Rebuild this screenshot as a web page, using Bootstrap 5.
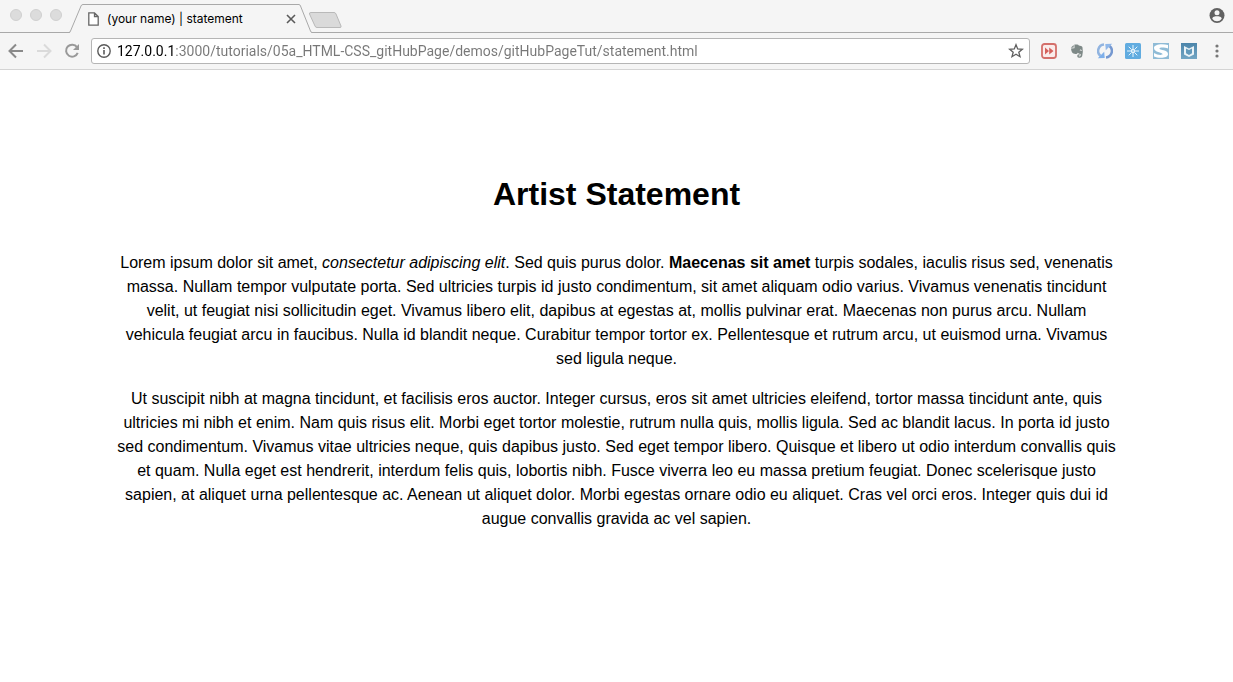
<!DOCTYPE html>
<html lang="en">
<head>
<meta charset="utf-8">
<meta name="viewport" content="width=device-width, initial-scale=1">
<title>(your name) | statement</title>
<link rel="stylesheet" href="https://cdn.jsdelivr.net/npm/bootstrap@5.3.0/dist/css/bootstrap.min.css">
<style>
body { font-family: "Liberation Sans", Arial, sans-serif; color: #000; background: #fff; }
.chrome { font-family: Inter, Roboto, sans-serif; background: #f5f5f5; border-bottom: 1px solid #d4d4d4; }
.chrome button { border: 0; background: none; padding: 0; color: #5f5f5f; display: flex; flex: none; }
.chrome svg { display: block; flex: none; }
.tab-strip { height: 33px; box-shadow: inset 0 -1px #a9a9a9; }
.lights { gap: 8px; padding: 9px 7px 0 10px; }
.chrome .light { width: 12px; height: 12px; border-radius: 50%; background: #dcdcdc; border: 1px solid #d0d0d0; }
.tab-face { width: 216px; height: 29px; border-top: 1px solid #a9a9a9; background: #f5f5f5; padding: 0 3px 0 5px; font-size: 12px; }
.chrome .new-tab { margin: 12px 0 0 -4px; }
.toolbar { height: 36px; padding: 0 8px; }
.nav-set { gap: 12px; margin-right: 11px; }
.address { height: 26px; border: 1px solid #b5b5b5; border-radius: 3px; background: #fff; padding: 0 5px; }
.address input { border: 0; outline: 0; padding: 0 6px; height: 22px; font-family: Roboto, sans-serif; font-size: 14px; color: transparent;
  background: linear-gradient(90deg, #000 64px, #777 64px); -webkit-background-clip: text; background-clip: text; }
.extensions { gap: 12px; margin-left: 11px; }
.statement { padding: 100px 116px 0; text-align: center; font-size: 16px; line-height: 24px; }
.statement h1 { font-size: 32px; line-height: 48px; font-weight: 700; margin-bottom: 33px; }
.statement p { margin-bottom: 16px; }
</style>
</head>
<body>
<header class="chrome">
  <div class="tab-strip d-flex align-items-end">
    <div class="lights d-flex align-self-start">
      <button class="light" aria-label="Close window"></button>
      <button class="light" aria-label="Minimize window"></button>
      <button class="light" aria-label="Zoom window"></button>
    </div>
    <div class="d-flex align-self-end">
      <svg width="14" height="29" viewBox="0 0 14 29"><path d="M0 29L1 28.500L12 2Q12.500.5 14 .5V29Z" fill="#f5f5f5"/><path d="M0 28.500Q1 28.500 1.500 27L12 2Q12.500.5 14 .5" fill="none" stroke="#a9a9a9"/></svg>
      <div class="tab-face d-flex align-items-center">
        <svg width="11" height="14" viewBox="0 0 11 14"><path d="M.8.8H6.500L10.200 4.500V13.200H.8ZM6.500.8V4.500H10.200" fill="#fff" stroke="#666" stroke-width="1.300"/></svg>
        <a href="#statement" class="text-black text-decoration-none ms-2 me-auto">(your name) | statement</a>
        <button aria-label="Close tab"><svg width="10" height="10" viewBox="0 0 10 10"><path d="M1 1L9 9M9 1L1 9" stroke="#5a5a5a" stroke-width="1.600"/></svg></button>
      </div>
      <svg width="13" height="29" viewBox="0 0 13 29"><path d="M0 .5Q1 .5 1.500 2L12 28L13 29H0Z" fill="#f5f5f5"/><path d="M0 .5Q1 .5 1.500 2L11.500 27Q12 28.500 13 28.500" fill="none" stroke="#a9a9a9"/></svg>
    </div>
    <button class="new-tab align-self-start" aria-label="New tab"><svg width="34" height="17" viewBox="0 0 34 17"><path d="M3 .5H26Q27.500.5 28 2L33 14Q33.500 15.500 32 15.500H9Q7.500 15.500 7 14L1.500 2Q1 .5 3 .5Z" fill="#dadada" stroke="#b9b9b9"/></svg></button>
    <button class="ms-auto me-2 align-self-start pt-2" aria-label="Profile"><svg width="16" height="16" viewBox="0 0 16 16"><circle cx="8" cy="7.500" r="7.500" fill="#616161"/><circle cx="8" cy="4.800" r="2.500" fill="#f5f5f5"/><path d="M3.300 10.700C3.300 8.800 6.300 8.200 8 8.200S12.700 8.800 12.700 10.700C11.600 12.400 9.900 13.200 8 13.200S4.400 12.400 3.300 10.700Z" fill="#f5f5f5"/></svg></button>
  </div>
  <div class="toolbar d-flex align-items-center">
    <div class="nav-set d-flex">
      <button aria-label="Back"><svg width="16" height="16" viewBox="0 0 16 16"><path d="M15 8H2M8 1.500L1.500 8L8 14.500" fill="none" stroke="#8a8a8a" stroke-width="2"/></svg></button>
      <button aria-label="Forward"><svg width="16" height="16" viewBox="0 0 16 16"><path d="M1 8H14M8 1.500L14.500 8L8 14.500" fill="none" stroke="#dadada" stroke-width="2"/></svg></button>
      <button aria-label="Reload"><svg width="16" height="16" viewBox="0 0 16 16"><path d="M13 4.200A6 6 0 1 0 13.700 9.800" fill="none" stroke="#999" stroke-width="2"/><path d="M15 1V7H9Z" fill="#999"/></svg></button>
    </div>
    <div class="address d-flex align-items-center flex-grow-1">
      <svg width="14" height="14" viewBox="0 0 14 14"><circle cx="7" cy="7" r="6.200" fill="none" stroke="#5a5a5a" stroke-width="1.400"/><path d="M7 6V10.500M7 3.300V4.900" stroke="#5a5a5a" stroke-width="1.600"/></svg>
      <input class="flex-grow-1" type="text" aria-label="Address" value="127.0.0.1:3000/tutorials/05a_HTML-CSS_gitHubPage/demos/gitHubPageTut/statement.html">
      <button aria-label="Bookmark"><svg width="16" height="16" viewBox="0 0 16 16"><path d="M8 1.700L9.700 6L14.300 6.300L10.800 9.200L12 13.700L8 11.200L4 13.700L5.200 9.200L1.700 6.300L6.300 6Z" fill="none" stroke="#5f5f5f" stroke-width="1.300"/></svg></button>
    </div>
    <div class="extensions d-flex">
      <button aria-label="Fast forward extension"><svg width="16" height="16" viewBox="0 0 16 16"><rect x="1" y="1" width="14" height="14" rx="2.500" fill="#faeceb" stroke="#d4706b" stroke-width="1.800"/><path d="M4 4.500L8 8L4 11.500ZM8.200 4.500L12.500 8L8.200 11.500Z" fill="#d4605b"/></svg></button>
      <button aria-label="Evernote"><svg width="16" height="16" viewBox="0 0 16 16"><path d="M5.400 1.500H8.200Q9.400 1.500 9.800 2.600L12 3Q13.300 3.200 13.500 4.500Q14.300 9 13.200 13Q12.800 14.800 11 14.800H9.900Q8.200 14.700 8.200 13Q8.200 11.300 10 11.300H10.700V12.500H10Q9.500 12.600 9.600 13.100Q9.700 13.500 10.300 13.500Q12 13.500 11.700 11Q10 11 8.800 9.800Q8.200 11.300 6.500 11L4.500 10.500Q2.500 9.800 2 5.500L5 5.300Q5.500 5.200 5.500 4.700Z" fill="#7e8987"/><path d="M1.800 4.700L4.700 1.900V4.600Z" fill="#7e8987"/><path d="M10.900 7.300Q12 6.500 12.700 7.500" stroke="#f5f5f5" fill="none"/></svg></button>
      <button aria-label="Sync"><svg width="16" height="16" viewBox="0 0 16 16"><path d="M7 1.500A6.500 6.500 0 0 0 3.500 13" fill="none" stroke="#91b4e0" stroke-width="2.500"/><path d="M.8 15.300L7.700 15L7.200 8.800Z" fill="#7eafea"/><path d="M9 14.500A6.500 6.500 0 0 0 12.500 3" fill="none" stroke="#7598d0" stroke-width="2.500"/><path d="M15.200.7L8.300 1L8.800 7.200Z" fill="#90b8ea"/></svg></button>
      <button aria-label="Snowflake extension"><svg width="16" height="16" viewBox="0 0 16 16"><rect width="16" height="16" rx="1.500" fill="#61ace0"/><path d="M8 2V6M8 10V14M2 8H6M10 8H14M3.700 3.700L6.600 6.600M9.400 9.400L12.300 12.300M12.300 3.700L9.400 6.600M6.600 9.400L3.700 12.300" stroke="#e9f5fc" stroke-width="1"/><circle cx="8" cy="8" r="1.700" fill="#a9d3ee" stroke="#fff" stroke-width=".8"/></svg></button>
      <button aria-label="S extension"><svg width="16" height="16" viewBox="0 0 16 16"><rect width="16" height="16" fill="#8fbbd6"/><path d="M15 2V5.500C12 4.500 6.500 4 6.500 5.500C6.500 7.500 15 6.500 15 11C15 15.500 5.500 15.500 1 13.500V10C4 12 9.500 12.600 9.500 11C9.500 9.200 1 9.500 1 5C1 1 9.500.5 15 2Z" fill="#fff"/></svg></button>
      <button aria-label="Shield extension"><svg width="16" height="16" viewBox="0 0 16 16"><defs><linearGradient id="shieldFill" x2="0" y2="1"><stop stop-color="#4c85aa"/><stop offset="1" stop-color="#73a6c4"/></linearGradient></defs><rect width="16" height="16" fill="url(#shieldFill)"/><path d="M3 3L8 5.500L13 3V11.500L8 14L3 11.500Z" fill="#e9f2f6"/><path d="M5 5.500L8 7L11 5.500V10.200L8 12L5 10.200Z" fill="#6299ba"/></svg></button>
      <button aria-label="Menu"><svg width="16" height="16" viewBox="0 0 16 16"><g fill="#777"><circle cx="8" cy="3" r="1.600"/><circle cx="8" cy="8" r="1.600"/><circle cx="8" cy="13" r="1.600"/></g></svg></button>
    </div>
  </div>
</header>
<main class="statement" id="statement">
  <h1>Artist Statement</h1>
  <p>Lorem ipsum dolor sit amet, <em>consectetur adipiscing elit</em>. Sed quis purus dolor. <strong>Maecenas sit amet</strong> turpis sodales, iaculis risus sed, venenatis massa. Nullam tempor vulputate porta. Sed ultricies turpis id justo condimentum, sit amet aliquam odio varius. Vivamus venenatis tincidunt velit, ut feugiat nisi sollicitudin eget. Vivamus libero elit, dapibus at egestas at, mollis pulvinar erat. Maecenas non purus arcu. Nullam vehicula feugiat arcu in faucibus. Nulla id blandit neque. Curabitur tempor tortor ex. Pellentesque et rutrum arcu, ut euismod urna. Vivamus sed ligula neque.</p>
  <p>Ut suscipit nibh at magna tincidunt, et facilisis eros auctor. Integer cursus, eros sit amet ultricies eleifend, tortor massa tincidunt ante, quis ultricies mi nibh et enim. Nam quis risus elit. Morbi eget tortor molestie, rutrum nulla quis, mollis ligula. Sed ac blandit lacus. In porta id justo sed condimentum. Vivamus vitae ultricies neque, quis dapibus justo. Sed eget tempor libero. Quisque et libero ut odio interdum convallis quis et quam. Nulla eget est hendrerit, interdum felis quis, lobortis nibh. Fusce viverra leo eu massa pretium feugiat. Donec scelerisque justo sapien, at aliquet urna pellentesque ac. Aenean ut aliquet dolor. Morbi egestas ornare odio eu aliquet. Cras vel orci eros. Integer quis dui id augue convallis gravida ac vel sapien.</p>
</main>
<script src="https://cdn.jsdelivr.net/npm/bootstrap@5.3.0/dist/js/bootstrap.bundle.min.js"></script>
</body>
</html>
